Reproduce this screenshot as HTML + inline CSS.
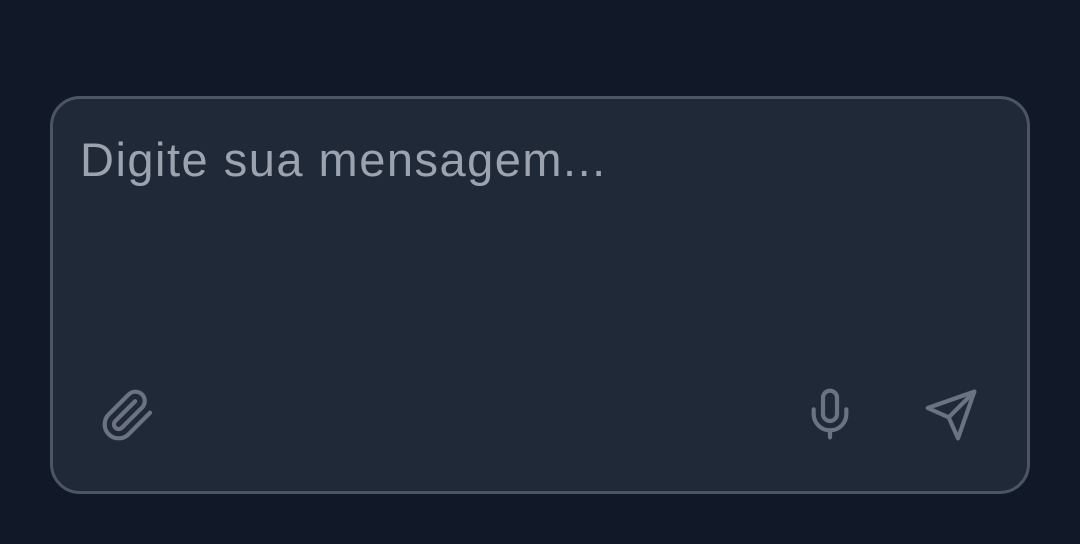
<!DOCTYPE html>
<html><head><style>
html,body{margin:0;padding:0;background:#111827;width:1080px;height:544px;overflow:hidden}
.box{position:absolute;left:50px;top:96px;width:974px;height:392px;border:3px solid #4b5563;border-radius:30px;background:#1f2937}
.t{position:absolute;left:80px;top:132px;font-family:"Liberation Sans",sans-serif;font-size:47px;color:#9ca3af;letter-spacing:1.5px}
svg{position:absolute;width:56px;height:56px;fill:none;stroke:#6b7280;stroke-width:1.8;stroke-linecap:round;stroke-linejoin:round}
</style></head><body>
<div class="box"></div>
<div class="t">Digite sua mensagem...</div>
<svg style="left:100px;top:387px" viewBox="0 0 24 24"><path d="m21.44 11.05-9.19 9.19a6 6 0 0 1-8.49-8.49l8.57-8.57A4 4 0 1 1 18 8.84l-8.59 8.57a2 2 0 0 1-2.83-2.83l8.49-8.48"/></svg>
<svg style="left:802px;top:386px" viewBox="0 0 24 24"><path d="M12 2a3 3 0 0 0-3 3v7a3 3 0 0 0 6 0V5a3 3 0 0 0-3-3Z"/><path d="M19 10v2a7 7 0 0 1-14 0v-2"/><path d="M12 19v3"/></svg>
<svg style="left:923px;top:387px" viewBox="0 0 24 24"><path d="m22 2-7 20-4-9-9-4Z"/><path d="M22 2 11 13"/></svg>
</body></html>
